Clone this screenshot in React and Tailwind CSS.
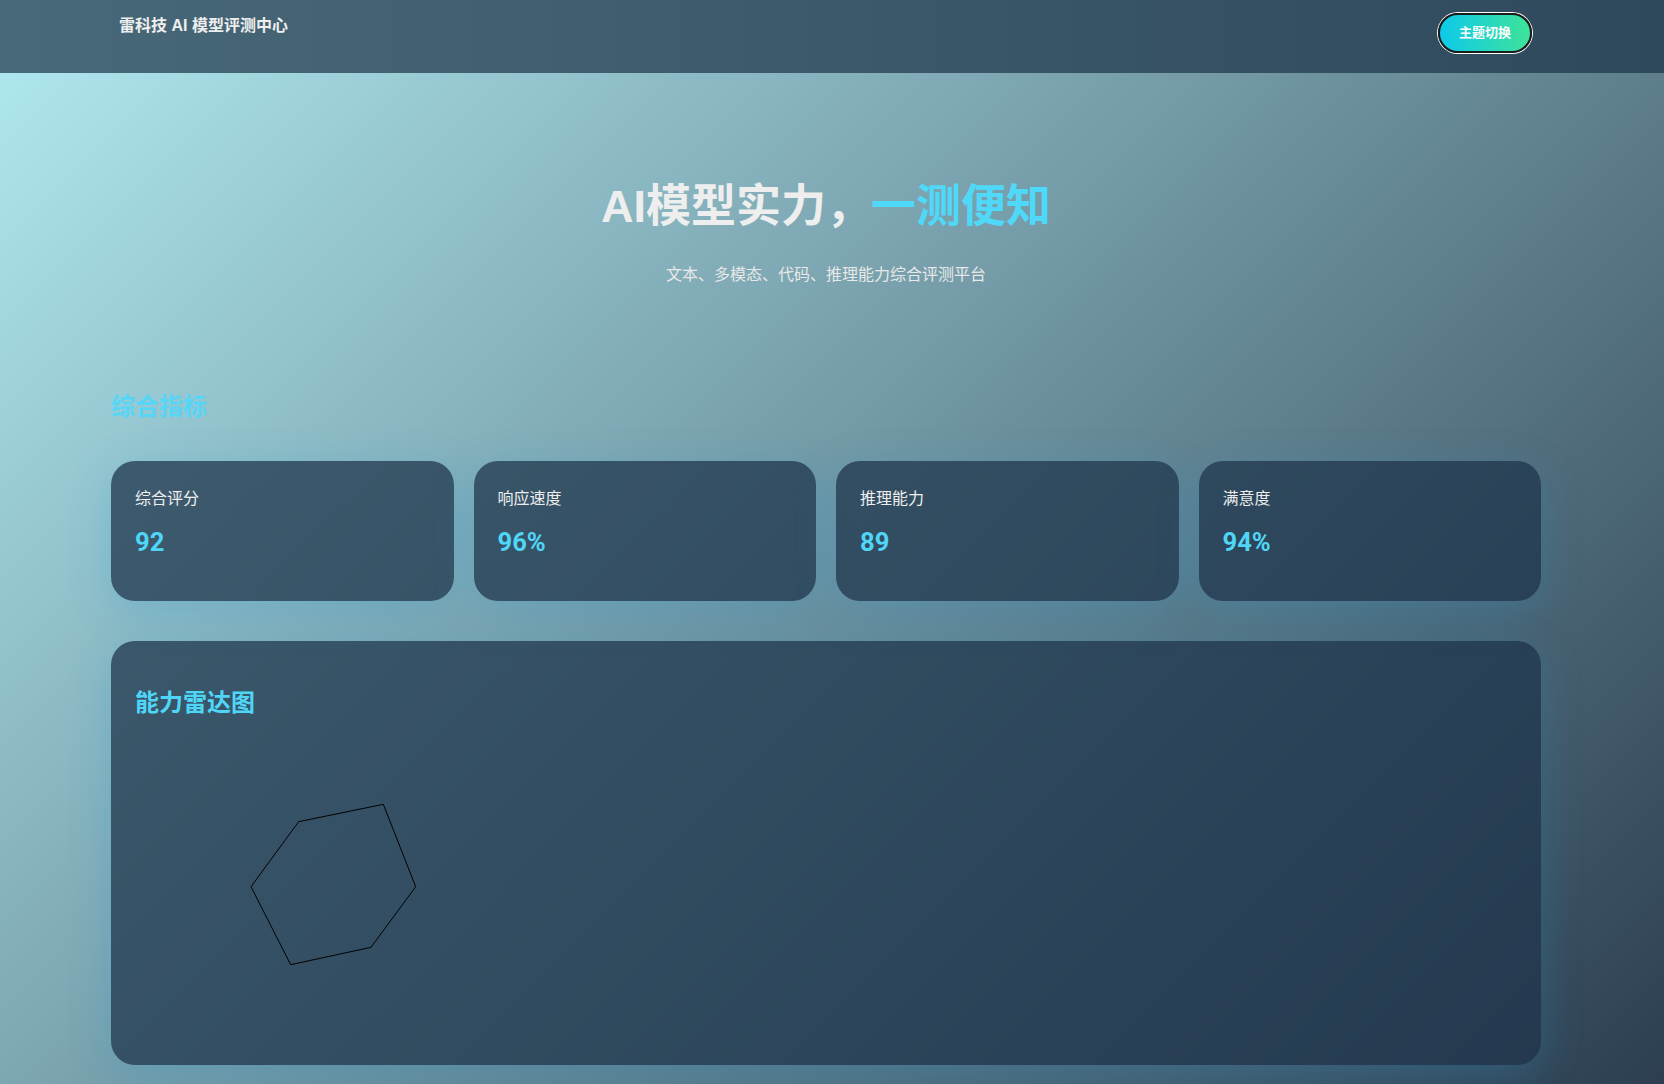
export default function App() {
  const sans = { fontFamily: '"Liberation Sans", "Noto Sans CJK SC", sans-serif' };

  const metrics = [
    { label: "综合评分", value: "92" },
    { label: "响应速度", value: "96%" },
    { label: "推理能力", value: "89" },
    { label: "满意度", value: "94%" },
  ];

  // radar outline, in the chart box's own pixel space
  const hex = "163.7,72.7 248.3,55.3 280.7,137.7 236,198.3 155.7,215.7 116,137.7";

  return (
    <div
      className="min-h-screen bg-[linear-gradient(135deg,#b2ebf2,#2c3e50)] text-[#eeeeee]"
      style={sans}
    >
      {/* top bar */}
      <header className="h-[73px] bg-[linear-gradient(90deg,#486979,#2e495b)]">
        <div className="mx-auto flex w-[1430px] items-start justify-between pl-[2px] pr-[15px]">
          <div className="pt-[14px] text-[16px] leading-6 font-bold text-[#eeeeee]">
            雷科技 AI 模型评测中心
          </div>
          <button className="mt-[13px] h-[40px] w-[94px] rounded-full border-2 border-[#1b1b1b] bg-[linear-gradient(90deg,#0ec9ea,#3ee39a)] text-[13px] font-bold text-white ring-1 ring-white">
            主题切换
          </button>
        </div>
      </header>

      <div className="pr-[12px]">
        {/* hero */}
        <section className="pt-[107px] text-center">
          <h1 className="text-[45px] leading-[54px] font-bold text-[#eeeeee]">
            AI模型实力，<span className="text-[#4fd8f8]">一测便知</span>
          </h1>
          <p className="mt-[29px] text-[16px] leading-6 text-[#e8e8e8]">
            文本、多模态、代码、推理能力综合评测平台
          </p>
        </section>

        <main className="mx-auto w-[1430px] pb-[18px]">
          <h2 className="mt-[102px] text-[24px] leading-9 font-bold text-[#55d6f7]">综合指标</h2>

          <div className="mt-[36px] grid grid-cols-4 gap-5">
            {metrics.map((m) => (
              <div
                key={m.label}
                className="h-[140px] rounded-3xl bg-[rgba(30,52,75,0.74)] px-6 pt-[26px] shadow-[0_10px_40px_rgba(40,150,210,0.25)]"
              >
                <div className="text-[16px] leading-6 text-[#eeeeee]">{m.label}</div>
                <div
                  className="mt-[13px] text-[25.6px] leading-9 font-bold text-[#4fd6f7]"
                  style={{ fontFamily: 'Roboto, "Liberation Sans", sans-serif' }}
                >
                  {m.value}
                </div>
              </div>
            ))}
          </div>

          <div className="mt-10 rounded-3xl bg-[rgba(30,52,75,0.74)] p-6 shadow-[0_10px_40px_rgba(40,150,210,0.25)]">
            <h3 className="mt-5 text-[24px] leading-9 font-bold text-[#4fd6f7]">能力雷达图</h3>
            <svg width="400" height="292" viewBox="0 0 400 292" className="mt-[28px] block">
              <polygon points={hex} fill="none" stroke="#000" strokeWidth="1" />
            </svg>
          </div>
        </main>
      </div>
    </div>
  );
}
